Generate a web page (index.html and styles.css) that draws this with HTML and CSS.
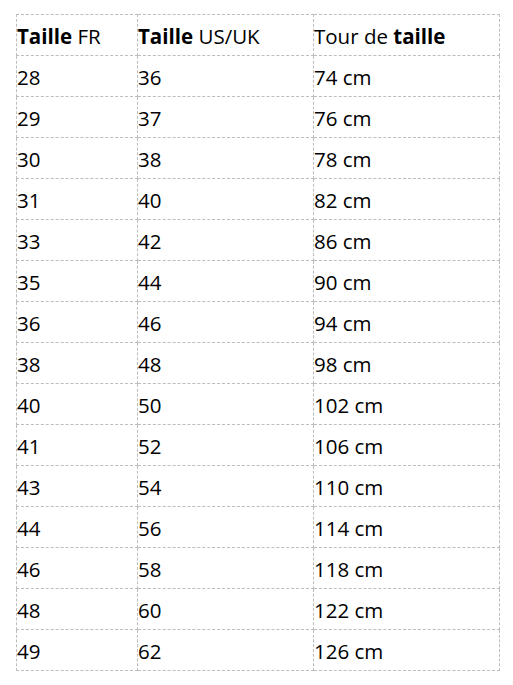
FILE: index.html
```html
<!DOCTYPE html>
<html lang="fr">
<head>
<meta charset="utf-8">
<link rel="stylesheet" href="styles.css">
</head>
<body>
<table class="sizes">
<thead>
<tr><th><b>Taille</b> FR</th><th><b>Taille</b> US/UK</th><th>Tour de <b>taille</b></th></tr>
</thead>
<tbody>
<tr><td>28</td><td>36</td><td>74 cm</td></tr>
<tr><td>29</td><td>37</td><td>76 cm</td></tr>
<tr><td>30</td><td>38</td><td>78 cm</td></tr>
<tr><td>31</td><td>40</td><td>82 cm</td></tr>
<tr><td>33</td><td>42</td><td>86 cm</td></tr>
<tr><td>35</td><td>44</td><td>90 cm</td></tr>
<tr><td>36</td><td>46</td><td>94 cm</td></tr>
<tr><td>38</td><td>48</td><td>98 cm</td></tr>
<tr><td>40</td><td>50</td><td>102 cm</td></tr>
<tr><td>41</td><td>52</td><td>106 cm</td></tr>
<tr><td>43</td><td>54</td><td>110 cm</td></tr>
<tr><td>44</td><td>56</td><td>114 cm</td></tr>
<tr><td>46</td><td>58</td><td>118 cm</td></tr>
<tr><td>48</td><td>60</td><td>122 cm</td></tr>
<tr><td>49</td><td>62</td><td>126 cm</td></tr>
</tbody>
</table>
</body>
</html>
```
FILE: styles.css
```css
html, body {
  margin: 0;
  padding: 0;
  background: #fff;
}
body {
  padding: 14px 0 0 16px;
  font-family: "Open Sans", "Noto Sans", sans-serif;
  font-size: 20.5px;
  color: #000;
}
.sizes {
  border-collapse: collapse;
  width: 484px;
  table-layout: fixed;
}
.sizes th, .sizes td {
  border: 1px dashed #bdbdbd;
  height: 38px;
  padding: 2px 0 0 0;
  text-align: left;
  vertical-align: middle;
  font-weight: normal;
  line-height: 24px;
}
.sizes th:nth-child(1) { width: 120px; }
.sizes th:nth-child(2) { width: 175px; }
.sizes b { font-weight: 700; }
```
